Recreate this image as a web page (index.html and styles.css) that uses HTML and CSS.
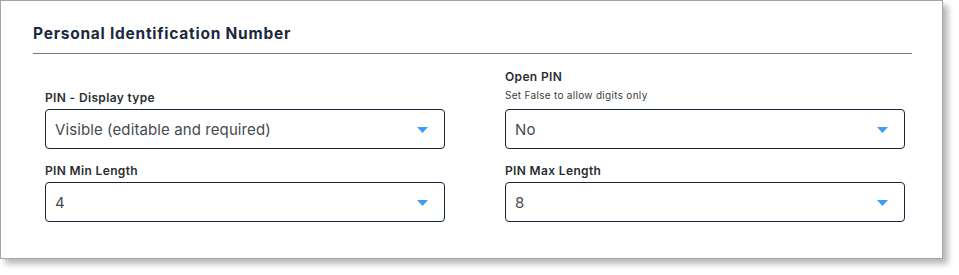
FILE: index.html
```html
<!DOCTYPE html>
<html lang="en">
<head>
    <meta charset="UTF-8">
    <title>Personal Identification Number</title>
    <link rel="stylesheet" href="styles.css">
</head>
<body class="page">
<div class="card">
    <h2 class="card-title">Personal Identification Number</h2>
    <div class="form-grid">
        <div class="field">
            <div class="label">PIN - Display type</div>
            <div class="select">
                <span>Visible (editable and required)</span>
                <svg class="caret" width="11" height="6" viewBox="0 0 11 6"><path d="M0 0h11L5.5 6z" fill="#3d9df3"/></svg>
            </div>
        </div>
        <div class="field">
            <div class="label">Open PIN</div>
            <div class="hint">Set False to allow digits only</div>
            <div class="select">
                <span>No</span>
                <svg class="caret" width="11" height="6" viewBox="0 0 11 6"><path d="M0 0h11L5.5 6z" fill="#3d9df3"/></svg>
            </div>
        </div>
        <div class="field">
            <div class="label">PIN Min Length</div>
            <div class="select">
                <span>4</span>
                <svg class="caret" width="11" height="6" viewBox="0 0 11 6"><path d="M0 0h11L5.5 6z" fill="#3d9df3"/></svg>
            </div>
        </div>
        <div class="field">
            <div class="label">PIN Max Length</div>
            <div class="select">
                <span>8</span>
                <svg class="caret" width="11" height="6" viewBox="0 0 11 6"><path d="M0 0h11L5.5 6z" fill="#3d9df3"/></svg>
            </div>
        </div>
    </div>
</div>
</body>
</html>
```

FILE: styles.css
```css
.page {
    margin: 0;
    min-height: 275px;
    background: #fff;
    font-family: Inter, "Open Sans", sans-serif;
}

.card {
    width: 941px;
    height: 257px;
    border: 1px solid #a3a3a3;
    background: #fff;
    box-shadow: 5px 5px 6px rgba(0, 0, 0, 0.28);
}

.card-title {
    margin: 0 30px 0 32px;
    padding: 24px 0 10px 0;
    font-size: 15.5px;
    font-weight: 700;
    letter-spacing: 0.75px;
    color: #1b2a3d;
    border-bottom: 1px solid #6e7782;
    line-height: 18px;
}

.form-grid {
    display: grid;
    grid-template-columns: 400px 400px;
    column-gap: 60px;
    row-gap: 14px;
    padding: 15px 0 0 44px;
}

.field {
    display: flex;
    flex-direction: column;
    justify-content: flex-end;
}

.label {
    font-size: 12px;
    font-weight: 600;
    letter-spacing: 0.35px;
    color: #2b2f33;
    line-height: 15px;
    margin-bottom: 4px;
}

.hint {
    font-size: 10px;
    letter-spacing: 0.3px;
    color: #3a3d40;
    line-height: 12px;
    margin: 1px 0 8px 0;
}

.select {
    height: 38px;
    border: 1px solid #16263a;
    border-radius: 4px;
    display: flex;
    align-items: center;
    justify-content: space-between;
    padding: 0 16px 0 9px;
    font-size: 15px;
    letter-spacing: 0.1px;
    color: #464a4e;
}

.caret {
    margin-top: 2px;
}
```
